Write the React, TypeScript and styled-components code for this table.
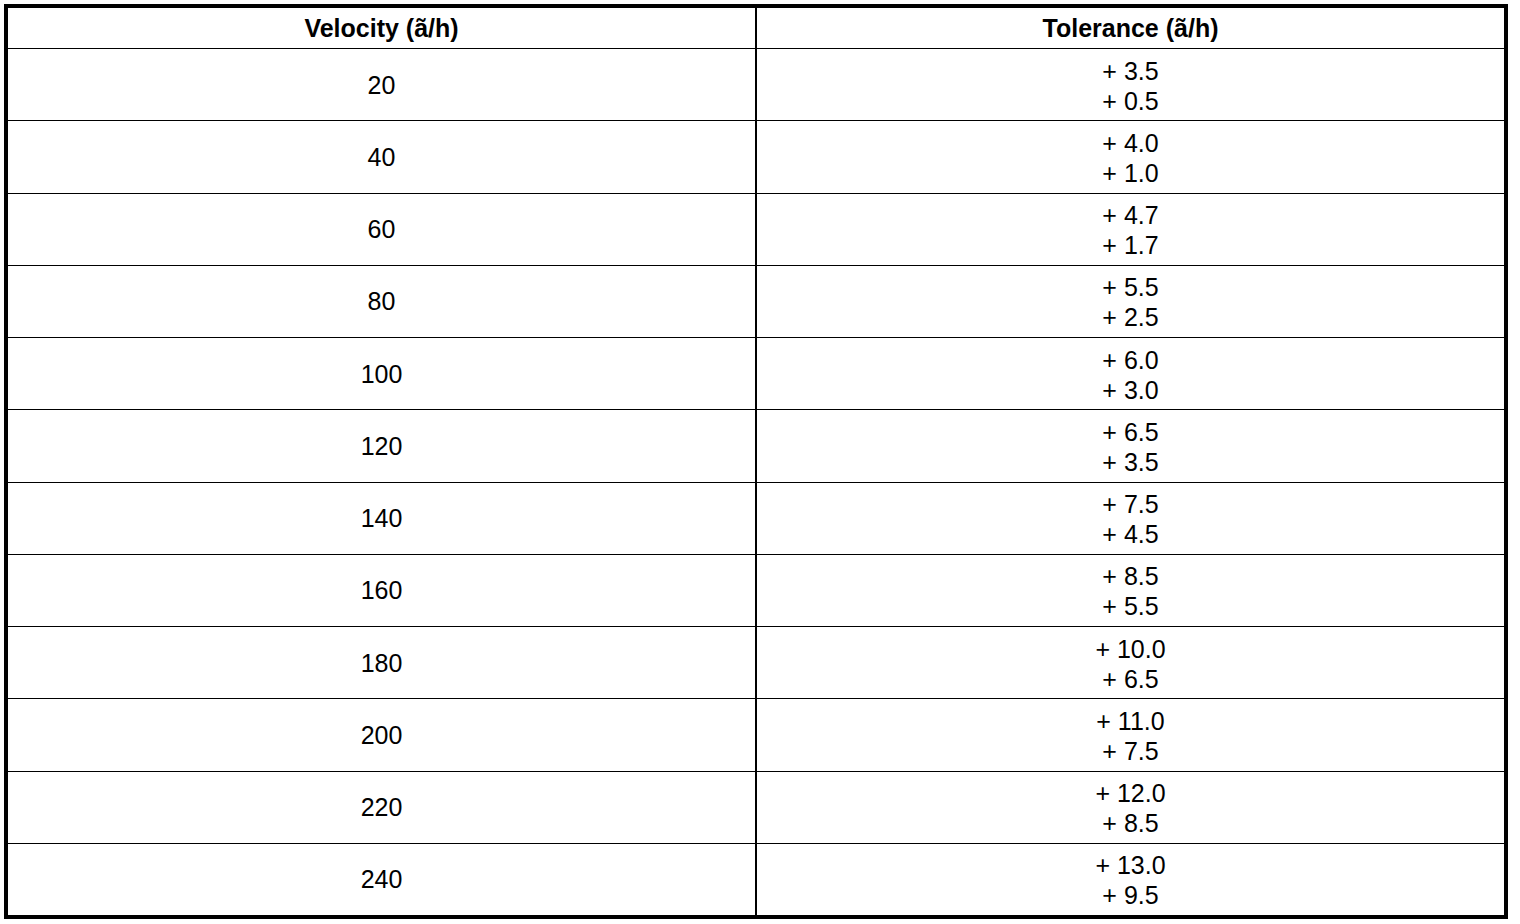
import React from "react";
import styled, { createGlobalStyle } from "styled-components";

const GlobalStyle = createGlobalStyle`
  html, body {
    margin: 0;
    padding: 0;
    background: #ffffff;
  }
  body {
    font-family: "Liberation Sans", Arial, sans-serif;
    color: #000000;
  }
`;

const Page = styled.div`
  padding: 4px;
`;

const Table = styled.div`
  box-sizing: border-box;
  width: 1504px;
  height: 915px;
  border: 4px solid #000;
  background: #000;
  display: grid;
  grid-template-columns: 1fr 1fr;
  grid-template-rows: 40px repeat(12, 1fr);
  column-gap: 2px;
  row-gap: 1px;
`;

const Cell = styled.div<{ $head?: boolean; $shift?: number }>`
  background: #fff;
  display: flex;
  flex-direction: column;
  align-items: center;
  justify-content: center;
  padding-top: ${(p) => p.$shift ?? 0}px;
  font-size: 25px;
  line-height: 30px;
  font-weight: ${(p) => (p.$head ? 700 : 400)};
  text-align: center;
  white-space: nowrap;
`;

const rows: [string, string, string][] = [
  ["20", "+ 3.5", "+ 0.5"],
  ["40", "+ 4.0", "+ 1.0"],
  ["60", "+ 4.7", "+ 1.7"],
  ["80", "+ 5.5", "+ 2.5"],
  ["100", "+ 6.0", "+ 3.0"],
  ["120", "+ 6.5", "+ 3.5"],
  ["140", "+ 7.5", "+ 4.5"],
  ["160", "+ 8.5", "+ 5.5"],
  ["180", "+ 10.0", "+ 6.5"],
  ["200", "+ 11.0", "+ 7.5"],
  ["220", "+ 12.0", "+ 8.5"],
  ["240", "+ 13.0", "+ 9.5"],
];

export default function App() {
  return (
    <>
      <GlobalStyle />
      <Page>
        <Table>
          <Cell $head>Velocity (ã/h)</Cell>
          <Cell $head>Tolerance (ã/h)</Cell>
          {rows.map(([v, a, b]) => (
            <React.Fragment key={v}>
              <Cell>{v}</Cell>
              <Cell $shift={2}>
                <span>{a}</span>
                <span>{b}</span>
              </Cell>
            </React.Fragment>
          ))}
        </Table>
      </Page>
    </>
  );
}
